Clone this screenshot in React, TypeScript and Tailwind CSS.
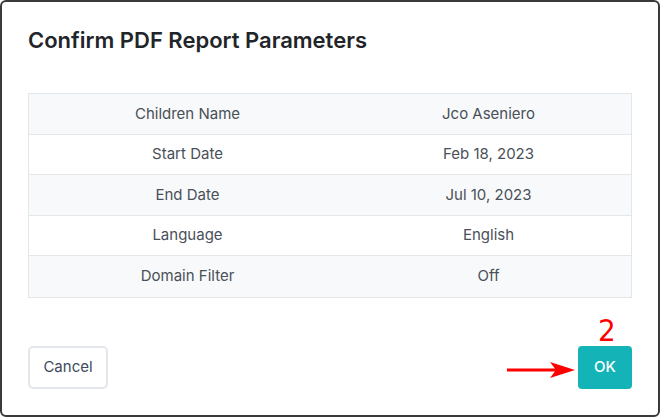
import React from "react";

const rows = [
  { label: "Children Name", value: "Jco Aseniero" },
  { label: "Start Date", value: "Feb 18, 2023" },
  { label: "End Date", value: "Jul 10, 2023" },
  { label: "Language", value: "English" },
  { label: "Domain Filter", value: "Off" },
];

export default function App() {
  return (
    <div className="w-[660px] h-[417px] bg-white" style={{ fontFamily: "Inter, 'Noto Sans', sans-serif" }}>
      <div className="relative w-full h-full box-border border-2 border-[#3a3a3a] rounded-[6px] bg-white flex flex-col px-[26px] pt-[24px] pb-[26px]">
        <h2 className="text-[22px] leading-[28px] font-semibold text-[#1f2529]">
          Confirm PDF Report Parameters
        </h2>

        <div className="mt-[39px] border border-[#e4e7ea] text-[15px] text-[#495057]">
          {rows.map((row, i) => (
            <div
              key={row.label}
              className={`grid grid-cols-[317px_1fr] h-[40.6px] items-center ${
                i < rows.length - 1 ? "border-b border-[#e4e7ea]" : ""
              } ${i % 2 === 0 ? "bg-[#f8f9fa]" : "bg-white"}`}
            >
              <div className="text-center">{row.label}</div>
              <div className="text-center">{row.value}</div>
            </div>
          ))}
        </div>

        <div className="mt-auto flex items-center justify-between">
          <button className="h-[43px] w-[80px] rounded-[5px] border-2 border-[#e3e6ea] bg-white text-[15px] text-[#3d4b5c]">
            Cancel
          </button>
          <button className="h-[43px] w-[54px] rounded-[4px] bg-[#14b3b8] text-[15px] font-medium text-white">
            OK
          </button>
        </div>

        {/* step marker pointing at the OK button */}
        <span
          className="absolute left-[596px] top-[310px] text-[31px] leading-[36px] text-[#ff0000]"
          style={{ fontFamily: "'Liberation Sans Narrow', 'DejaVu Sans Condensed', sans-serif" }}
        >
          2
        </span>
        <svg className="absolute left-[503px] top-[358px]" width="72" height="20" viewBox="0 0 72 20">
          <line x1="2" y1="10" x2="52" y2="10" stroke="#ff0000" strokeWidth="3" />
          <polygon points="45,2 70,10 45,18 51,10" fill="#ff0000" />
        </svg>
      </div>
    </div>
  );
}
